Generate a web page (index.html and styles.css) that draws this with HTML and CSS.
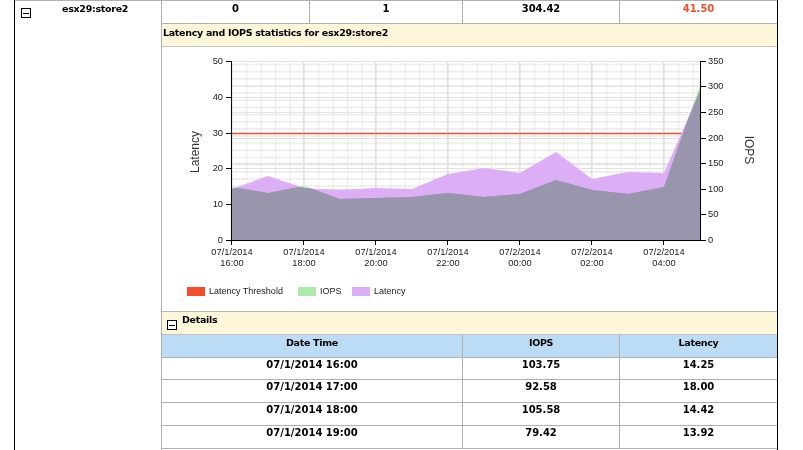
FILE: index.html
```html
<!DOCTYPE html>
<html lang="en">

<head>
    <meta charset="UTF-8">
    <title>Latency and IOPS</title>
    <link rel="stylesheet" href="styles.css">
</head>

<body>

    <div class="frame">
        <div class="name-col">
            <div class="name-row">
                <svg class="toggle" width="10" height="10" viewBox="0 0 10 10"><rect x="0.5" y="0.5" width="9" height="9" fill="#fff" stroke="#000"/><path d="M2 5.5h6" stroke="#000"/></svg>
                <span class="name txt">esx29:store2</span>
            </div>
        </div>

        <div class="main-col">
            <table class="stats">
                <tr>
                    <td class="c1">0</td>
                    <td class="c2">1</td>
                    <td class="c3">304.42</td>
                    <td class="c4 alert">41.50</td>
                </tr>
            </table>

            <div class="band title-band txt">Latency and IOPS statistics for esx29:store2</div>

            <div class="chart">
                <svg width="615" height="264" viewBox="162 47 615 264">
                    <defs>
                        <pattern id="minor" x="232" y="61" width="14.4" height="7.16" patternUnits="userSpaceOnUse">
                            <path d="M0 3.5h14.4" stroke="#d8d8d8" stroke-width="1" stroke-dasharray="2 1"/>
                            <path d="M0.5 0v7.16" stroke="#dcdcdc" stroke-width="1" stroke-dasharray="1 1"/>
                        </pattern>
                        <clipPath id="in-latency">
                            <polygon points="232,240 232,189 268,176 304,188 340,190 376,188 412,189 448,174 484,168 520,173 556,152 592,179 628,172 664,173 700,91 700,240"/>
                        </clipPath>
                    </defs>

                    <rect x="232" y="61" width="468" height="179" fill="url(#minor)"/>

                    <path class="grid" d="M303.5 61v179M375.5 61v179M447.5 61v179M519.5 61v179M591.5 61v179M663.5 61v179"/>
                    <path class="grid" d="M232 61.5h468M232 97.5h468M232 133.5h468M232 168.5h468M232 204.5h468"/>
                    <path class="grid" d="M232 86.5h468M232 112.5h468M232 138.5h468M232 163.5h468M232 189.5h468M232 214.5h468"/>

                    <path class="threshold-glow" d="M232 133.5h468"/>
                    <path class="threshold" d="M232 133.5h468"/>

                    <g class="areas">
                        <polygon class="iops" points="232,240 232,187 268,193 304,186 340,199 376,198 412,197 448,193 484,197 520,194 556,180 592,190 628,194 664,187 700,86 700,240"/>
                        <polygon class="latency" points="232,240 232,189 268,176 304,188 340,190 376,188 412,189 448,174 484,168 520,173 556,152 592,179 628,172 664,173 700,91 700,240"/>
                    </g>
                    <polygon class="overlap" clip-path="url(#in-latency)" points="232,240 232,187 268,193 304,186 340,199 376,198 412,197 448,193 484,197 520,194 556,180 592,190 628,194 664,187 700,86 700,240"/>

                    <path class="axis" d="M231.5 61v179.5M700.5 61v179.5M232 240.5h468"/>
                    <path class="axis" d="M226 61.5h6M226 97.5h6M226 133.5h6M226 168.5h6M226 204.5h6M226 240.5h6"/>
                    <path class="axis" d="M700 61.5h6M700 86.5h6M700 112.5h6M700 138.5h6M700 163.5h6M700 189.5h6M700 214.5h6M700 240.5h6"/>
                    <path class="axis" d="M231.5 240v5M303.5 240v5M375.5 240v5M447.5 240v5M519.5 240v5M591.5 240v5M663.5 240v5"/>

                    <g class="labels end">
                        <text x="223" y="64">50</text>
                        <text x="223" y="100">40</text>
                        <text x="223" y="136">30</text>
                        <text x="223" y="171">20</text>
                        <text x="223" y="207">10</text>
                        <text x="223" y="243">0</text>
                    </g>
                    <g class="labels">
                        <text x="708" y="64">350</text>
                        <text x="708" y="89">300</text>
                        <text x="708" y="115">250</text>
                        <text x="708" y="141">200</text>
                        <text x="708" y="166">150</text>
                        <text x="708" y="192">100</text>
                        <text x="708" y="217">50</text>
                        <text x="708" y="243">0</text>
                    </g>
                    <g class="labels middle">
                        <text x="232" y="255">07/1/2014</text><text x="232" y="266">16:00</text>
                        <text x="304" y="255">07/1/2014</text><text x="304" y="266">18:00</text>
                        <text x="376" y="255">07/1/2014</text><text x="376" y="266">20:00</text>
                        <text x="448" y="255">07/1/2014</text><text x="448" y="266">22:00</text>
                        <text x="520" y="255">07/2/2014</text><text x="520" y="266">00:00</text>
                        <text x="592" y="255">07/2/2014</text><text x="592" y="266">02:00</text>
                        <text x="664" y="255">07/2/2014</text><text x="664" y="266">04:00</text>
                    </g>

                    <text class="axis-title" transform="translate(199 152) rotate(-90)">Latency</text>
                    <text class="axis-title" transform="translate(745 150) rotate(90)">IOPS</text>

                    <rect x="187" y="287" width="18" height="9" fill="#f24e2c"/>
                    <text class="labels legend" x="209" y="294">Latency Threshold</text>
                    <rect x="298" y="287" width="18" height="9" fill="#aeeaa9"/>
                    <text class="labels legend" x="320" y="294">IOPS</text>
                    <rect x="352" y="287" width="18" height="9" fill="#dcaef5"/>
                    <text class="labels legend" x="374" y="294">Latency</text>
                </svg>
            </div>

            <div class="band details-band">
                <svg class="toggle" width="10" height="10" viewBox="0 0 10 10"><rect x="0.5" y="0.5" width="9" height="9" fill="#fff" stroke="#000"/><path d="M2 5.5h6" stroke="#000"/></svg>
                <span class="txt">Details</span>
            </div>

            <table class="details">
                <tr class="head">
                    <th class="d1 txt">Date Time</th>
                    <th class="d2 txt">IOPS</th>
                    <th class="d3 txt">Latency</th>
                </tr>
                <tr class="first">
                    <td>07/1/2014 16:00</td>
                    <td>103.75</td>
                    <td>14.25</td>
                </tr>
                <tr>
                    <td>07/1/2014 17:00</td>
                    <td>92.58</td>
                    <td>18.00</td>
                </tr>
                <tr>
                    <td>07/1/2014 18:00</td>
                    <td>105.58</td>
                    <td>14.42</td>
                </tr>
                <tr>
                    <td>07/1/2014 19:00</td>
                    <td>79.42</td>
                    <td>13.92</td>
                </tr>
            </table>
        </div>
    </div>

</body></html>
```

FILE: styles.css
```css
html, body {
    margin: 0;
    height: 450px;
    overflow: hidden;
    background-color: #fff;
}

body {
    font-family: "DejaVu Sans", sans-serif;
    font-size: 10px;
    font-weight: bold;
    color: #000;
}

.txt {
    font-size: 9.5px;
    letter-spacing: -0.3px;
}

.frame {
    display: flex;
    width: 764px;
    height: 450px;
    margin-left: 14px;
    border-left: 1px solid #000;
    border-right: 1px solid #000;
    box-sizing: border-box;
}

.name-col {
    width: 146px;
    flex: none;
    border-top: 1px solid #b0b0b0;
}

.name-row {
    display: flex;
    padding-left: 6px;
}

.name-row .toggle {
    margin-top: 7px;
}

.name {
    margin: 2px 0 0 31px;
}

.toggle {
    display: block;
    flex: none;
}

.main-col {
    flex: 1;
    min-width: 0;
    border-left: 1px solid #b0b0b0;
}

table {
    width: 100%;
    table-layout: fixed;
    border-collapse: collapse;
    text-align: center;
}

td, th {
    padding: 1px 0 0;
    vertical-align: top;
    border-left: 1px solid #b0b0b0;
    border-bottom: 1px solid #b0b0b0;
    line-height: 12px;
}

td:first-child, th:first-child {
    border-left: 0;
}

.stats td {
    padding-top: 2px;
    height: 20px;
    border-top: 1px solid #b0b0b0;
}

.c1 { width: 147px; }
.c2 { width: 152px; }
.c3 { width: 156px; }

.alert {
    color: #f24e2c;
}

.band {
    background-color: #fef6d8;
    border-bottom: 1px solid #c4c4c4;
    box-sizing: border-box;
}

.title-band {
    height: 23px;
    padding: 3px 0 0 1px;
    line-height: 12px;
}

.chart {
    height: 265px;
    border-bottom: 1px solid #b8b8b8;
    box-sizing: border-box;
}

.chart svg {
    display: block;
}

.details-band {
    display: flex;
    height: 23px;
    padding: 2px 0 0 5px;
    line-height: 12px;
}

.details-band .toggle {
    margin-top: 6px;
}

.details-band span {
    margin-left: 5px;
}

.details th, .details td {
    height: 21px;
}

.details .head th {
    background-color: #bcdcf6;
    padding-top: 2px;
    height: 20px;
}

.details .first td {
    height: 20px;
}

.d1 { width: 300px; }
.d2 { width: 156px; }

.grid {
    fill: none;
    stroke: #e4e0e0;
    stroke-width: 1;
}

.threshold {
    fill: none;
    stroke: #e4553f;
    stroke-width: 1;
}

.threshold-glow {
    fill: none;
    stroke: #f6cfc8;
    stroke-width: 3;
}

.areas {
    isolation: isolate;
}

.iops {
    fill: #aeeaa9;
    mix-blend-mode: multiply;
}

.latency {
    fill: #dcaef5;
    mix-blend-mode: multiply;
}

.overlap {
    fill: #9a93ae;
    opacity: 0.88;
}

.axis {
    fill: none;
    stroke: #000;
    stroke-width: 1;
}

.labels {
    font-family: "Liberation Sans", sans-serif;
    font-size: 9.3px;
    font-weight: normal;
    fill: #1a1a1a;
}

.legend {
    font-size: 9px;
}

.end text {
    text-anchor: end;
}

.middle text {
    text-anchor: middle;
}

.axis-title {
    font-family: "Liberation Sans", sans-serif;
    font-size: 12px;
    font-weight: normal;
    fill: #333;
    text-anchor: middle;
}
```
